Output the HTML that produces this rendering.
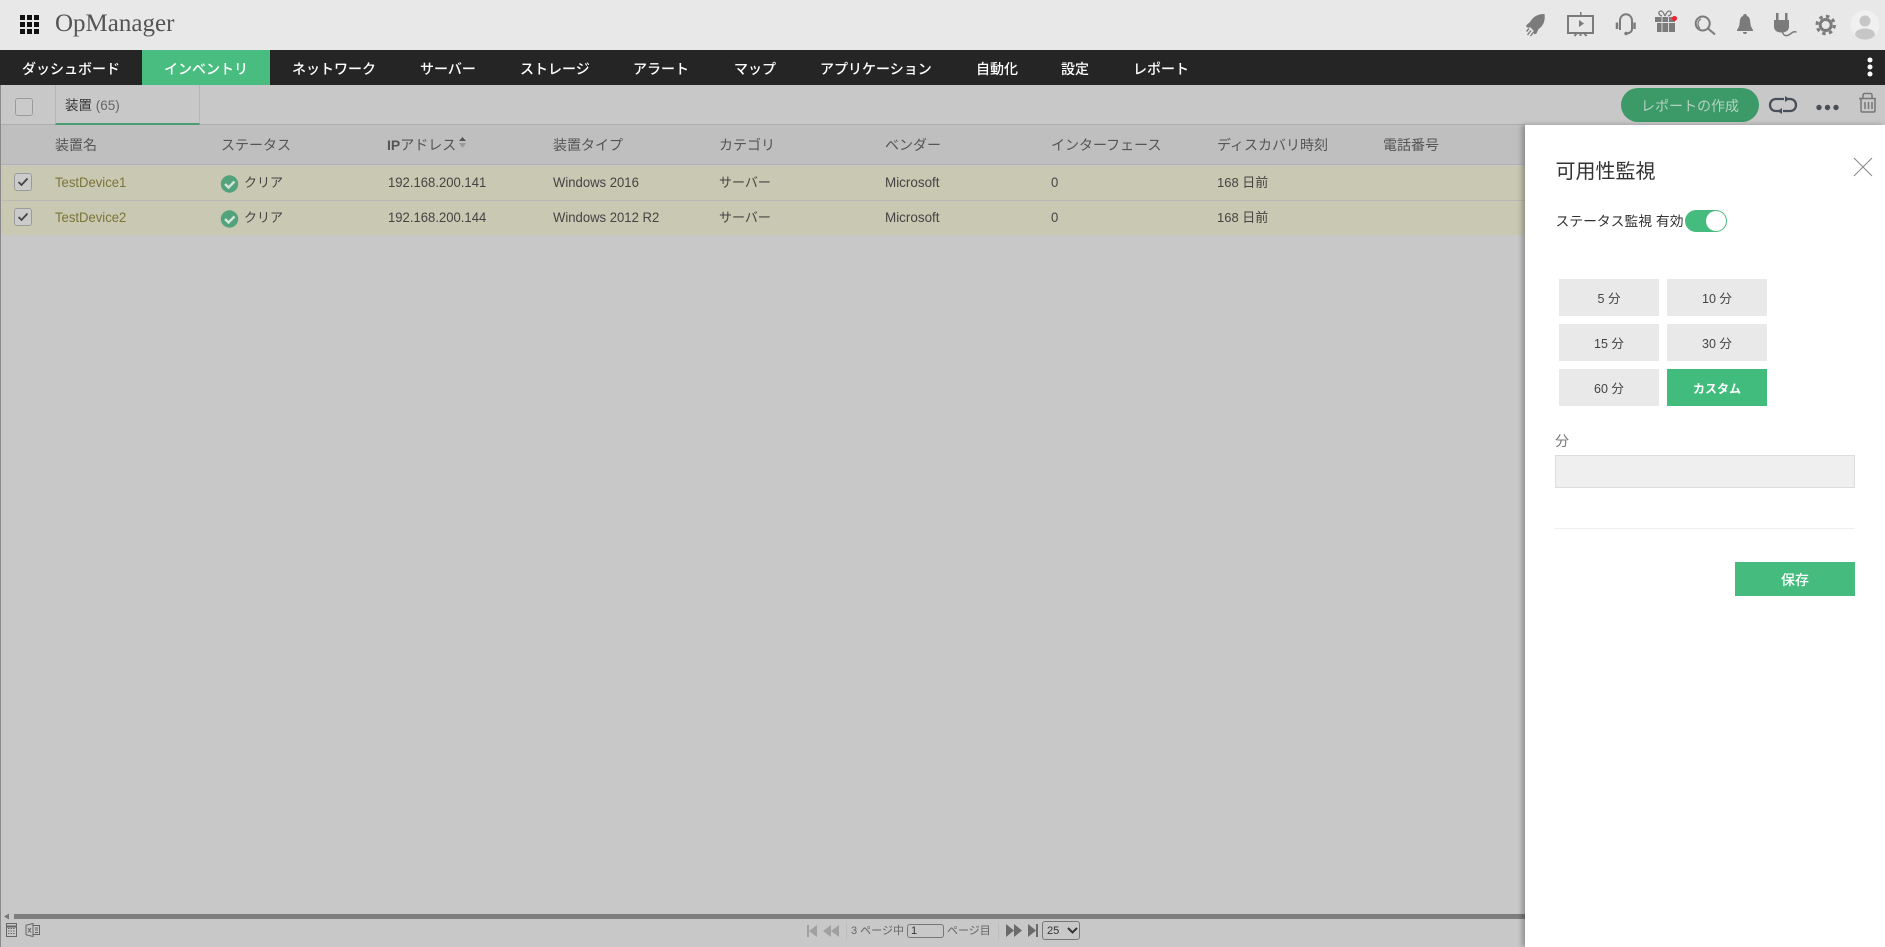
<!DOCTYPE html>
<html lang="ja"><head><meta charset="utf-8"><title>OpManager</title>
<style>
*{box-sizing:border-box}
html,body{margin:0;padding:0;width:1885px;height:947px;overflow:hidden;background:#c8c8c8;font-family:"Liberation Sans","Noto Sans CJK JP",sans-serif;color:#444}
.a{position:absolute;white-space:nowrap}
.t{position:absolute;white-space:nowrap;height:20px;line-height:20px;font-size:13px}
.l{font-size:14px;transform:scaleX(.935);transform-origin:left center}
.n{position:absolute;white-space:nowrap;top:58px;height:22px;line-height:22px;font-size:14px;color:#fff;font-weight:500}
.h{position:absolute;white-space:nowrap;top:135px;height:20px;line-height:20px;font-size:14px;color:#555}
.cb{position:absolute;width:18px;height:18px;border:1px solid #9b9b9b;border-radius:3px;background:#cbcbcb}
.b{position:absolute;width:100px;height:37px;background:#e9e9e9;color:#444;font-size:12.5px;text-align:center;line-height:40px}
</style></head><body>
<div class="a" style="left:0;top:0;width:1885px;height:50px;background:#e8e8e9"></div>
<svg class="a" style="left:0;top:0" width="1885" height="50" viewBox="0 0 1885 50">
<g fill="#111"><rect x="20" y="15" width="5" height="5"/><rect x="27" y="15" width="5" height="5"/><rect x="34" y="15" width="5" height="5"/><rect x="20" y="22" width="5" height="5"/><rect x="27" y="22" width="5" height="5"/><rect x="34" y="22" width="5" height="5"/><rect x="20" y="29" width="5" height="5"/><rect x="27" y="29" width="5" height="5"/><rect x="34" y="29" width="5" height="5"/></g>
<g fill="#7b7b7b" stroke="none">
<path d="M1544.500 14C1537 14 1533 17 1530 22L1526 25.500L1527 27.500L1530.500 27.500L1534 31L1534 34.500L1536.500 33.500L1538.500 29C1543.500 26 1545.500 20 1544.500 14Z"/>
<path d="M1580 12h1.500v3h-1.500z"/>
<path d="M1579 20l5 3.500-5 3.500z"/>
<rect x="1655" y="17" width="20" height="5"/><rect x="1657" y="23" width="18" height="9"/>
<path d="M1745 14c1 0 2 1 2 2 3 1 3 4 3.500 8 .3 3 2 5 2.500 6v1h-16v-1c.5-1 2.200-3 2.500-6 .5-4 .5-7 3.500-8 0-1 1-2 2-2zM1743 32h4c0 1.500-1 2-2 2s-2-.5-2-2z"/>
<path d="M1776 13h2.500v7h-2.500zM1785 13h2.500v7h-2.500zM1774 20h15v6.500c0 4-3 6-7.500 6s-7.500-2-7.500-6z"/>
</g>
<g fill="none" stroke="#7b7b7b" stroke-width="1.400">
<path d="M1527.500 35l3.500-4.500M1530.500 36l3.500-4.500M1526.500 31.500l2.500-3"/>
</g>
<g fill="none" stroke="#7b7b7b" stroke-width="2">
<rect x="1568" y="16" width="25" height="17"/>
<path d="M1580.500 33v3M1577 33l-2.500 3M1584 33l2.500 3"/>
<path d="M1620 30V21c0-9 12-9 12 0v8c0 3-3 4.500-6 4.500"/>
<path d="M1617 22.500v6.500M1634.500 22.500v6.500" stroke-width="2.500"/>
<circle cx="1702.700" cy="23.500" r="7"/>
<path d="M1708 28.500l7 6"/>
<path d="M1662 16c-4-1-4-5-1-5 2 0 3 3 4 5M1668 16c4-1 4-5 1-5-2 0-3 3-4 5" stroke-width="1.300"/>
<path d="M1782.500 32c1 4 4 4.500 7 2.500s4-3.500 7-2.500" stroke-width="1.500"/>
<circle cx="1825.700" cy="25" r="5.500" stroke-width="3"/>
<circle cx="1825.700" cy="25" r="8.700" stroke-width="3" stroke-dasharray="3.400 3.430"/>
</g>
<path d="M1700 28.500c-3-3-2.500-8 1-9.500" fill="none" stroke="#7b7b7b" stroke-width="1.300"/>
<circle cx="1626" cy="33.500" r="1.700" fill="#7b7b7b"/>
<path d="M1661.500 17h1v15h-1zM1668 17h1v15h-1z" fill="#d8d9d9"/>
<circle cx="1674.500" cy="18.500" r="2.500" fill="#f4202c"/>
<circle cx="1865" cy="25" r="14.500" fill="#f0f0f0"/>
<circle cx="1865" cy="21" r="5.500" fill="#c6c6c6"/>
<path d="M1855 35c0-4 4-6.500 10-6.500s10 2.500 10 6.500c-2 3-6 4.500-10 4.500s-8-1.500-10-4.500z" fill="#c6c6c6"/>
</svg>
<div class="a" style="left:55px;top:9px;font:25px/30px 'Liberation Serif','Noto Serif CJK SC',serif;color:#555">OpManager</div>

<div class="a" style="left:0;top:50px;width:1885px;height:35px;background:#252525"></div>
<div class="a" style="left:142px;top:50px;width:128px;height:35px;background:#48bd7f"></div>
<div class="n" style="left:22px">ダッシュボード</div>
<div class="n" style="left:164px">インベントリ</div>
<div class="n" style="left:292px">ネットワーク</div>
<div class="n" style="left:420px">サーバー</div>
<div class="n" style="left:520px">ストレージ</div>
<div class="n" style="left:633px">アラート</div>
<div class="n" style="left:734px">マップ</div>
<div class="n" style="left:820px">アプリケーション</div>
<div class="n" style="left:976px">自動化</div>
<div class="n" style="left:1061px">設定</div>
<div class="n" style="left:1133px">レポート</div>
<svg class="a" style="left:1860px;top:50px" width="20" height="35"><g fill="#fff"><circle cx="10" cy="10" r="2.500"/><circle cx="10" cy="17" r="2.500"/><circle cx="10" cy="24" r="2.500"/></g></svg>

<div class="a" style="left:0;top:124px;width:1525px;height:1px;background:#aeaeae"></div>
<div class="a" style="left:0;top:85px;width:1px;height:862px;background:#8a8a8a"></div>
<div class="cb" style="left:15px;top:98px;background:#cacaca"></div>
<div class="a" style="left:55px;top:85px;width:145px;height:40px;border-left:1px solid #b6b6b6;border-right:1px solid #b6b6b6;border-bottom:2px solid #4a9c72"></div>
<div class="t" style="left:65px;top:96px;color:#333;font-size:13.500px">装置 <span style="color:#666">(65)</span></div>
<div class="a" style="left:1621px;top:88px;width:138px;height:34px;border-radius:17px;background:#3b9a68;color:#b4d3c2;font-size:14px;line-height:36px;text-align:center">レポートの作成</div>
<svg class="a" style="left:1760px;top:88px" width="125" height="36" viewBox="0 0 125 36">
<g fill="none" stroke="#47505a" stroke-width="2.300"><path d="M24 11H16c-8 0-8 12 0 12h5M23 23h7c8 0 8-12 0-12h-3"/></g>
<path d="M25 8v6l4.500-3zM22 20v6l-4.500-3z" fill="#47505a"/>
<g fill="#4a4f55"><circle cx="59" cy="19.500" r="2.700"/><circle cx="67.500" cy="19.500" r="2.700"/><circle cx="76" cy="19.500" r="2.700"/></g>
<g fill="none" stroke="#777" stroke-width="1.500"><path d="M99 10.500h17M103 10v-3c0-1 1-1.500 1.500-1.500h6c.5 0 1.500.5 1.500 1.500v3"/><path d="M101 11v11.500c0 1 .5 1.500 1.500 1.500h11c1 0 1.500-.5 1.500-1.500V11"/><path d="M105 14v7M108.500 14v7M112 14v7"/></g>
</svg>

<div class="a" style="left:1px;top:125px;width:1524px;height:40px;background:#bfbfbf;border-bottom:1px solid #b2b2b2"></div>
<div class="h" style="left:55px">装置名</div>
<div class="h" style="left:221px">ステータス</div>
<div class="h" style="left:387px"><b style="font-weight:700">IP</b>アドレス</div>
<svg class="a" style="left:458px;top:136px" width="9" height="13"><path d="M4.500 1L8 5H1z" fill="#555"/><path d="M4.500 12L8 7H1z" fill="#9a9a9a"/></svg>
<div class="h" style="left:553px">装置タイプ</div>
<div class="h" style="left:719px">カテゴリ</div>
<div class="h" style="left:885px">ベンダー</div>
<div class="h" style="left:1051px">インターフェース</div>
<div class="h" style="left:1217px">ディスカバリ時刻</div>
<div class="h" style="left:1383px">電話番号</div>

<div class="a" style="left:1px;top:166px;width:1524px;height:34px;background:#c9c8b2"></div>
<div class="a" style="left:1px;top:200px;width:1524px;height:1px;background:#b9b9b5"></div>
<div class="a" style="left:1px;top:201px;width:1524px;height:34px;background:#c9c8b2"></div>

<div class="cb" style="left:14px;top:173px"></div>
<div class="cb" style="left:14px;top:208px"></div>
<svg class="a" style="left:14px;top:173px" width="18" height="53"><path d="M4.500 9l3 3L13.500 5.500M4.500 44l3 3L13.500 40.500" fill="none" stroke="#444" stroke-width="1.800"/></svg>
<svg class="a" style="left:220px;top:174px" width="20" height="55">
<circle cx="9.500" cy="10" r="8.700" fill="#52a27b"/><circle cx="9.500" cy="45" r="8.700" fill="#52a27b"/>
<path d="M5 10l3.500 3.500L14.500 7.500M5 45l3.500 3.500L14.500 42.500" fill="none" stroke="#d5e5dc" stroke-width="2.400"/></svg>

<div class="t l" style="left:55px;top:172px;color:#7a7438">TestDevice1</div>
<div class="t" style="left:244px;top:173px">クリア</div>
<div class="t l" style="left:388px;top:172px">192.168.200.141</div>
<div class="t l" style="left:553px;top:172px">Windows 2016</div>
<div class="t" style="left:719px;top:173px">サーバー</div>
<div class="t l" style="left:885px;top:172px;transform:scaleX(.96)">Microsoft</div>
<div class="t l" style="left:1051px;top:172px">0</div>
<div class="t" style="left:1217px;top:173px">168 日前</div>

<div class="t l" style="left:55px;top:207px;color:#7a7438">TestDevice2</div>
<div class="t" style="left:244px;top:208px">クリア</div>
<div class="t l" style="left:388px;top:207px">192.168.200.144</div>
<div class="t l" style="left:553px;top:207px">Windows 2012 R2</div>
<div class="t" style="left:719px;top:208px">サーバー</div>
<div class="t l" style="left:885px;top:207px;transform:scaleX(.96)">Microsoft</div>
<div class="t l" style="left:1051px;top:207px">0</div>
<div class="t" style="left:1217px;top:208px">168 日前</div>

<div class="a" style="left:14px;top:914px;width:1511px;height:5px;background:#7e7e7e"></div>
<svg class="a" style="left:3px;top:913px" width="8" height="7"><path d="M1 3.500L6 .5v6z" fill="#777"/></svg>
<svg class="a" style="left:5px;top:922px" width="38" height="16" viewBox="0 0 38 16">
<g fill="none" stroke="#666" stroke-width="1"><rect x="1.500" y="1.500" width="10" height="13"/><path d="M3 6.500h7M3 9h7M3 11.500h7" stroke-dasharray="1.500 1"/><path d="M1.500 4.500h10" stroke-width="2"/>
<path d="M28 1.500l-7 1.800v9.400l7 1.800zM28 3.500h6.500v9H28M30 6h3M30 8h3M30 10.500h3"/><path d="M23 6l3 4.500M26 6l-3 4.500"/></g></svg>

<svg class="a" style="left:805px;top:921px" width="240" height="20" viewBox="0 0 240 20">
<g fill="#a0a0a0"><rect x="2" y="4" width="2" height="12"/><path d="M12 4v12l-8-6zM26 4v12l-8-6zM34 4v12l-8-6z"/></g>
<rect x="41" y="2" width="1" height="17" fill="#bcbcbc"/>
<rect x="193" y="2" width="1" height="17" fill="#bcbcbc"/>
<g fill="#6a6a6a"><path d="M201 3v13l8-6.500zM209 3v13l8-6.500zM223 3v13l8-6.500z"/><rect x="231" y="3" width="2" height="13"/></g>
</svg>
<div class="t" style="left:851px;top:921px;font-size:11px;color:#666">3 ページ中</div>
<div class="a" style="left:907px;top:924px;width:37px;height:14px;border:1px solid #777;border-radius:3px;font-size:11px;line-height:13px;padding-left:3px;color:#333">1</div>
<div class="t" style="left:947px;top:921px;font-size:11px;color:#666">ページ目</div>
<div class="a" style="left:1042px;top:921px;width:38px;height:19px;border:1px solid #777;border-radius:3px;font-size:11px;line-height:19px;padding-left:4px;color:#333">25<svg class="a" style="left:24px;top:5px" width="11" height="8"><path d="M1 1l4.500 4.500L10 1" fill="none" stroke="#333" stroke-width="2"/></svg></div>

<div class="a" style="left:1525px;top:125px;width:360px;height:822px;background:#fff;box-shadow:-3px 0 5px rgba(0,0,0,.28)"></div>
<div class="t" style="left:1555.500px;top:159px;height:26px;line-height:26px;font-size:20px;color:#333">可用性監視</div>
<svg class="a" style="left:1853px;top:157px" width="20" height="20"><path d="M1 1l18 18M19 1L1 19" stroke="#888" stroke-width="1" fill="none"/></svg>
<div class="t" style="left:1555.500px;top:212px;font-size:13.800px;color:#333">ステータス監視 有効</div>
<div class="a" style="left:1685px;top:210px;width:42px;height:22px;border-radius:11px;background:#45bc7e"></div>
<div class="a" style="left:1706px;top:211px;width:20px;height:20px;border-radius:50%;background:#fff"></div>
<div class="b" style="left:1559px;top:279px">5 分</div>
<div class="b" style="left:1667px;top:279px">10 分</div>
<div class="b" style="left:1559px;top:324px">15 分</div>
<div class="b" style="left:1667px;top:324px">30 分</div>
<div class="b" style="left:1559px;top:369px">60 分</div>
<div class="b" style="left:1667px;top:369px;background:#41bc7d;color:#fff;font-weight:700;font-size:12px">カスタム</div>
<div class="t" style="left:1555px;top:431px;font-size:14px;color:#777">分</div>
<div class="a" style="left:1555px;top:455px;width:300px;height:33px;background:#efefef;border:1px solid #ddd"></div>
<div class="a" style="left:1555px;top:528px;width:300px;height:1px;background:#eee"></div>
<div class="a" style="left:1735px;top:562px;width:120px;height:34px;background:#45bc7e;color:#fff;font-size:14px;font-weight:500;text-align:center;line-height:36px">保存</div>
</body></html>
